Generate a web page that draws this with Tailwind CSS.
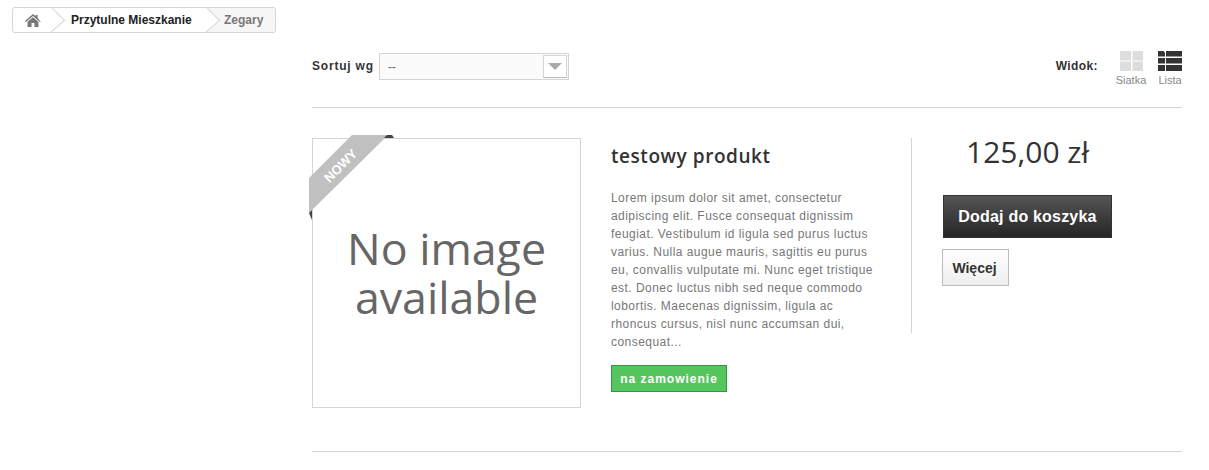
<!doctype html>
<html lang="pl">
<head>
<meta charset="utf-8">
<script src="https://cdn.jsdelivr.net/npm/@tailwindcss/browser@4"></script>
</head>
<body class="bg-white font-['Liberation_Sans',Arial,sans-serif] text-[#333]">
<div class="h-[470px] w-[1209px] overflow-hidden relative">
  <nav class="ml-3 mt-[7px] flex h-[26px] w-[264px] items-center overflow-hidden rounded-[3px] border border-[#d6d4d4] text-xs font-bold">
    <a class="relative flex h-full w-[39px] items-center pl-[12px] shrink-0">
      <svg width="16" height="13" viewBox="0 0 16 13" fill="#777"><path d="M8 0 L10.6 2.3 V1 H12.6 V4 L16 7 L15 8 L8 2 L1 8 L0 7 Z"/><path d="M2.6 7.8 L8 3.3 L13.4 7.8 V13 H9.5 V9 H6.5 V13 H2.6 Z"/></svg>
      <span class="absolute -right-[9px] top-[3px] h-[18px] w-[18px] rotate-45 skew-x-[-5deg] border-t border-r border-[#d6d4d4] bg-white"></span>
    </a>
    <a class="relative flex h-full w-[155px] shrink-0 items-center pl-[19px] text-[#222]">
      Przytulne Mieszkanie
      <span class="absolute -right-[9px] top-[3px] z-10 h-[18px] w-[18px] rotate-45 skew-x-[-5deg] border-t border-r border-[#d6d4d4] bg-white"></span>
    </a>
    <span class="flex h-full flex-1 items-center bg-[#f6f6f6] pl-[17px] text-[#777]">Zegary</span>
  </nav>
  <main class="ml-[312px] w-[870px]">
    <div class="mt-[20px] flex h-[54px] items-start">
      <span class="mt-[5px] text-xs font-bold tracking-[0.8px] text-[#333]">Sortuj wg</span>
      <div class="ml-[5px] flex h-[27px] w-[190px] items-center justify-between border border-[#d6d4d4] bg-[#fbfbfb] pl-[8px] pr-px text-xs text-[#666]">
        <span>--</span>
        <span class="flex h-[23px] w-[24px] items-center justify-center border border-[#d6d4d4] border-b-[#bbb] bg-white">
          <span class="h-0 w-0 border-x-[7px] border-t-[7px] border-x-transparent border-t-[#aaa]"></span>
        </span>
      </div>
      <div class="ml-auto flex items-start">
        <span class="mt-[5px] mr-[18px] text-xs font-bold tracking-[0.4px]">Widok:</span>
        <div class="-mt-[2px] flex w-[30px] flex-col items-center">
          <svg width="23" height="20" viewBox="0 0 23 20" fill="#ddd"><rect width="11" height="9.5"/><rect x="12.5" width="10.5" height="9.5"/><rect y="10.5" width="11" height="9.5"/><rect x="12.5" y="10.5" width="10.5" height="9.5"/></svg>
          <span class="mt-[2px] text-[11px] leading-[14px] text-[#888]">Siatka</span>
        </div>
        <div class="-mt-[2px] ml-[12px] flex w-[24px] flex-col items-center">
          <svg width="24" height="20" viewBox="0 0 24 20" fill="#333"><path d="M0 0H5.5L7 1.5V5.5H0Z"/><rect x="8" width="16" height="5.5"/><rect y="7" width="7" height="5.5"/><rect x="8" y="7" width="16" height="5.5"/><rect y="14" width="7" height="6"/><rect x="8" y="14" width="16" height="6"/></svg>
          <span class="mt-[2px] text-[11px] leading-[14px] text-[#888]">Lista</span>
        </div>
      </div>
    </div>
    <hr class="border-0 border-t border-[#d6d4d4]">
    <article class="mt-[30px] flex h-[314px] items-start border-b border-[#d6d4d4]">
      <div class="relative h-[270px] w-[269px] shrink-0 border border-[#d6d4d4] bg-white">
        <div class="flex h-full flex-col items-center justify-center pb-[3px] font-['Open_Sans',sans-serif] text-[44.7px] leading-[49px] font-medium text-[#666]">
          <span>No image</span><span>available</span>
        </div>
        <svg class="absolute -left-[4px] -top-[4px]" width="86" height="86" viewBox="0 0 86 86"><path d="M43 0H79L0 78V43Z" fill="#c0c0c0"/><path d="M78 0H83L85 3H75Z" fill="#444"/><path d="M0 78L3 75V85Z" fill="#444"/></svg>
        <span class="absolute left-[5px] top-[20px] w-[46px] -rotate-45 text-center text-[13px] leading-[14px] font-bold text-white">NOWY</span>
      </div>
      <div class="ml-[30px] w-[270px] shrink-0">
        <h2 class="mt-[3px] font-['Open_Sans',sans-serif] text-[19px] leading-[30px] font-semibold tracking-[0.55px] text-[#333]">testowy produkt</h2>
        <p class="mt-[18px] w-[265px] text-xs leading-[18px] tracking-[0.45px] text-[#777]">Lorem ipsum dolor sit amet, consectetur adipiscing elit. Fusce consequat dignissim feugiat. Vestibulum id ligula sed purus luctus varius. Nulla augue mauris, sagittis eu purus eu, convallis vulputate mi. Nunc eget tristique est. Donec luctus nibh sed neque commodo lobortis. Maecenas dignissim, ligula ac rhoncus cursus, nisl nunc accumsan dui, consequat...</p>
        <span class="mt-[14px] inline-flex h-[27px] w-[116px] items-center justify-center border border-[#36943e] bg-[#55c65e] text-xs font-bold tracking-[1px] text-white">na zamowienie</span>
      </div>
      <div class="ml-[30px] h-[195px] flex-1 border-l border-[#d6d4d4] pl-[30px]">
        <div class="-mt-px ml-px w-[169px] text-center font-['Open_Sans',sans-serif] text-[30px] leading-[30px] font-medium text-[#333]">125,00 zł</div>
        <button class="mt-[28px] ml-px flex h-[43px] w-[169px] items-center justify-center border border-[#333] bg-linear-to-b from-[#555] to-[#262626] text-base font-bold tracking-[0.2px] text-white">Dodaj do koszyka</button>
        <button class="mt-[11px] flex h-[37px] w-[67px] items-center justify-center border border-[#bbb] bg-linear-to-b from-white to-[#eee] pr-[2px] text-sm font-bold text-[#333]">Więcej</button>
      </div>
    </article>
  </main>
</div>
</body>
</html>
